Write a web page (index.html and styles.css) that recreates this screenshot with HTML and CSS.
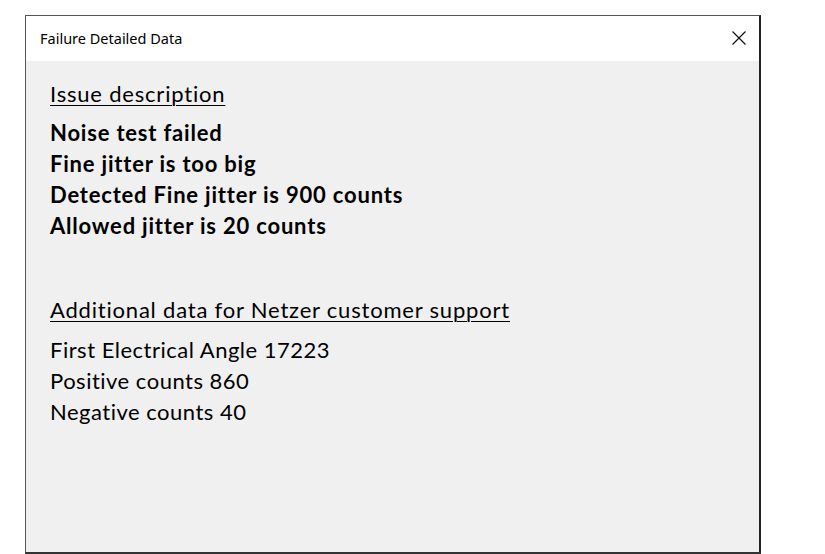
FILE: index.html
```html
<!DOCTYPE html>
<html lang="en">
<head>
  <meta charset="UTF-8" />
  <title>Failure Detailed Data</title>
  <link rel="stylesheet" href="styles.css">
</head>
<body>

  <div class="dialog">
    <div class="title-bar">
      <span class="title">Failure Detailed Data</span>
      <button class="close-btn" aria-label="Close">
        <svg width="14" height="14" viewBox="0 0 14 14">
          <path d="M0.5 0.5 L13.5 13.5 M13.5 0.5 L0.5 13.5" stroke="#111" stroke-width="1.2" fill="none" />
        </svg>
      </button>
    </div>

    <div class="content">
      <h2 class="section-title">Issue description</h2>
      <div class="issue-lines">
        <p>Noise test failed</p>
        <p>Fine jitter is too big</p>
        <p>Detected Fine jitter is 900 counts</p>
        <p>Allowed jitter is 20 counts</p>
      </div>

      <h2 class="section-title second">Additional data for Netzer customer support</h2>
      <div class="data-lines">
        <p>First Electrical Angle 17223</p>
        <p>Positive counts 860</p>
        <p>Negative counts 40</p>
      </div>
    </div>
  </div>

</body>
</html>
```

FILE: styles.css
```css
body {
  margin: 0;
  background: #fff;
  font-family: "Lato", "Noto Sans", sans-serif;
  color: #000;
}

.dialog {
  margin: 15px 0 0 25px;
  width: 736px;
  height: 539px;
  box-sizing: border-box;
  border: 1px solid #555;
  border-right: 2px solid #222;
  border-bottom: 2px solid #333;
  background: #f0f0f0;
  display: flex;
  flex-direction: column;
}

.title-bar {
  height: 45px;
  background: #fff;
  display: flex;
  align-items: center;
  justify-content: space-between;
  padding: 0 13px 0 14px;
  flex-shrink: 0;
}

.title {
  font-family: "Noto Sans", sans-serif;
  font-size: 14.5px;
  color: #000;
  margin-top: -2px;
}

.close-btn {
  background: none;
  border: none;
  padding: 0;
  width: 14px;
  height: 14px;
  margin-top: -1px;
  cursor: pointer;
}

.close-btn svg {
  display: block;
}

.content {
  padding: 17px 24px 0;
  font-size: 22px;
  line-height: 31px;
  letter-spacing: 0.8px;
}

.content p {
  margin: 0;
}

.section-title {
  margin: 0 0 8px;
  font-size: 22px;
  font-weight: normal;
  line-height: 31px;
  text-decoration: underline;
  text-underline-offset: 3px;
  text-decoration-thickness: 1px;
}

.section-title.second {
  margin-top: 53px;
  margin-bottom: 9px;
}

.issue-lines {
  font-weight: bold;
}

.data-lines {
  letter-spacing: 0.5px;
}
```
